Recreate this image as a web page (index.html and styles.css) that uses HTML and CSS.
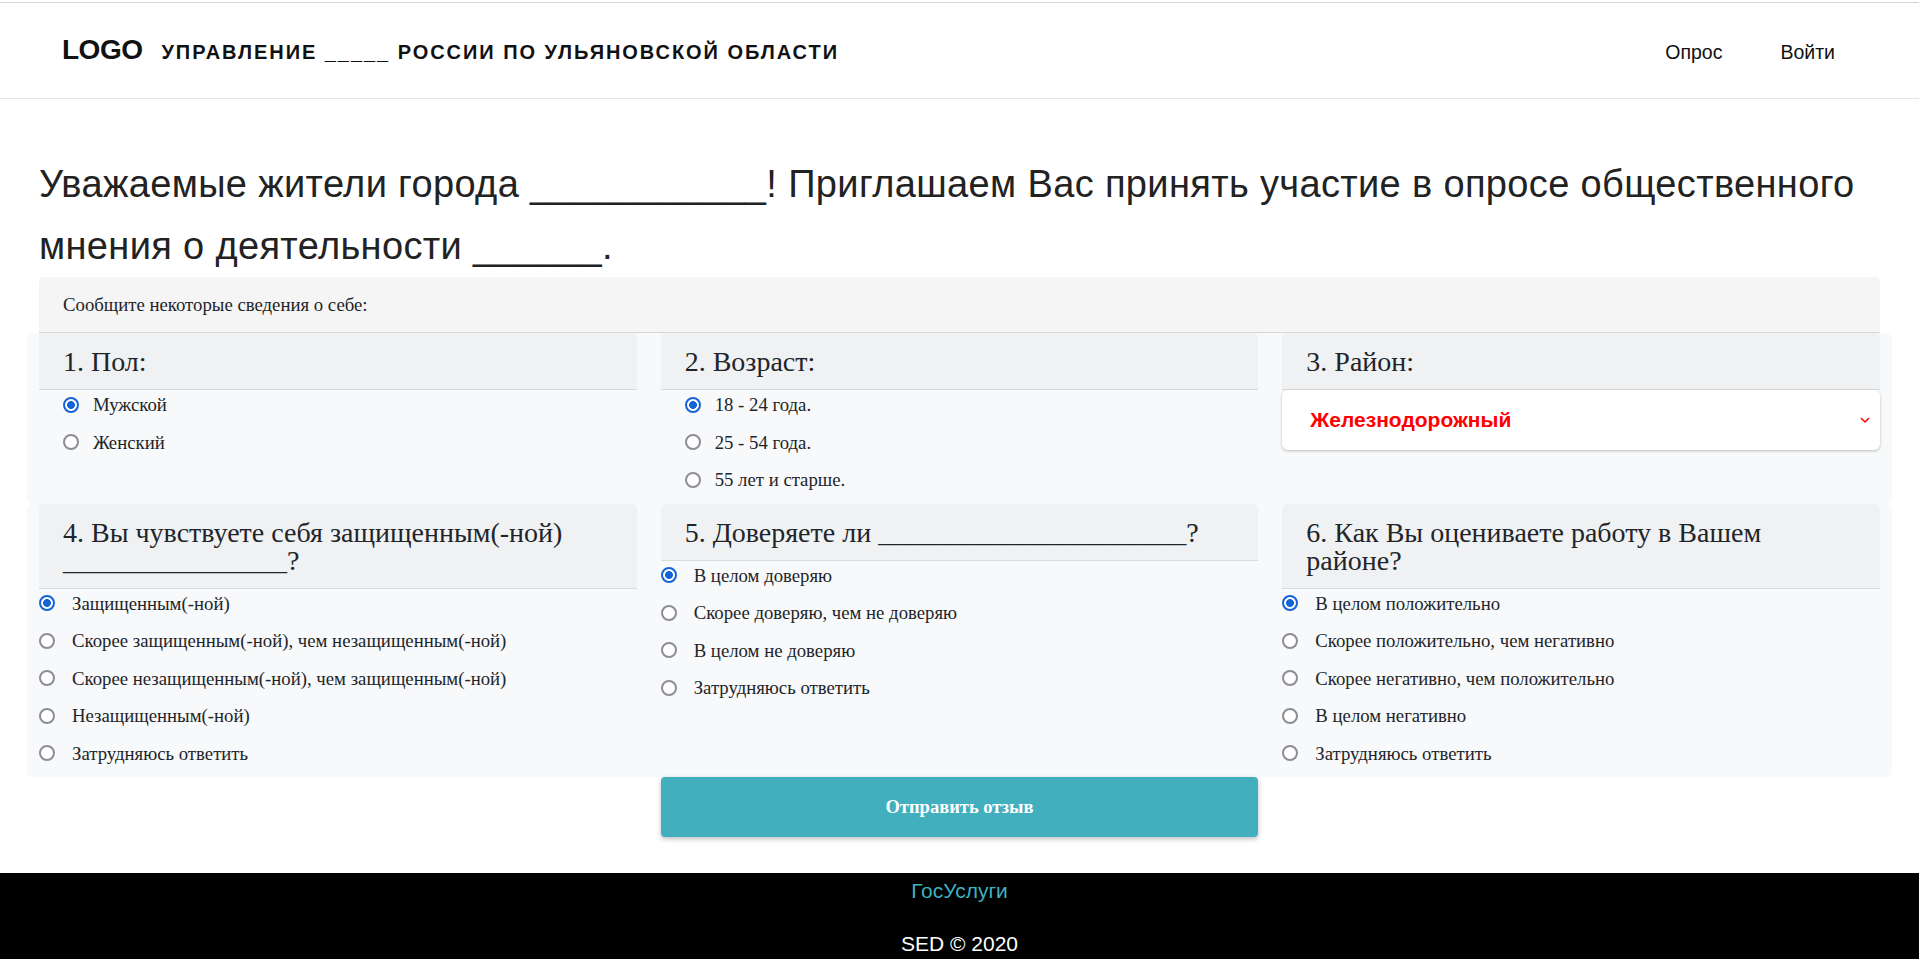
FILE: index.html
```html
<!DOCTYPE html>
<html lang="ru">
<head>
<meta charset="utf-8">
<title>Опрос</title>
<link rel="stylesheet" href="styles.css">
</head>
<body>
<header class="topbar">
  <div class="brand">
    <span class="logo">LOGO</span>
    <span class="org">УПРАВЛЕНИЕ _____ РОССИИ ПО УЛЬЯНОВСКОЙ ОБЛАСТИ</span>
  </div>
  <nav class="nav">
    <a class="nav-link" href="#">Опрос</a>
    <a class="nav-link" href="#">Войти</a>
  </nav>
</header>

<main class="container">
  <h1 class="title">Уважаемые жители города ___________! Приглашаем Вас принять участие в опросе общественного мнения о деятельности ______.</h1>

  <form class="survey">
    <div class="info">Сообщите некоторые сведения о себе:</div>

    <div class="row">
      <section class="col">
        <h3 class="q-head">1. Пол:</h3>
        <div class="opts opts-inset">
          <label class="opt"><input type="radio" name="sex" checked>Мужской</label>
          <label class="opt"><input type="radio" name="sex">Женский</label>
        </div>
      </section>
      <section class="col">
        <h3 class="q-head">2. Возраст:</h3>
        <div class="opts opts-inset">
          <label class="opt"><input type="radio" name="age" checked>18 - 24 года.</label>
          <label class="opt"><input type="radio" name="age">25 - 54 года.</label>
          <label class="opt"><input type="radio" name="age">55 лет и старше.</label>
        </div>
      </section>
      <section class="col">
        <h3 class="q-head">3. Район:</h3>
        <div class="select">
          <span class="select-value">Железнодорожный</span>
          <svg class="chevron" width="10" height="7" viewBox="0 0 10 7"><polyline points="1,1 5,5 9,1" fill="none" stroke="#f00" stroke-width="1.5"/></svg>
        </div>
      </section>
    </div>

    <div class="row">
      <section class="col">
        <h3 class="q-head">4. Вы чувствуете себя защищенным(-ной) ________________?</h3>
        <div class="opts">
          <label class="opt"><input type="radio" name="safe" checked>Защищенным(-ной)</label>
          <label class="opt"><input type="radio" name="safe">Скорее защищенным(-ной), чем незащищенным(-ной)</label>
          <label class="opt"><input type="radio" name="safe">Скорее незащищенным(-ной), чем защищенным(-ной)</label>
          <label class="opt"><input type="radio" name="safe">Незащищенным(-ной)</label>
          <label class="opt"><input type="radio" name="safe">Затрудняюсь ответить</label>
        </div>
      </section>
      <section class="col">
        <h3 class="q-head">5. Доверяете ли ______________________?</h3>
        <div class="opts">
          <label class="opt"><input type="radio" name="trust" checked>В целом доверяю</label>
          <label class="opt"><input type="radio" name="trust">Скорее доверяю, чем не доверяю</label>
          <label class="opt"><input type="radio" name="trust">В целом не доверяю</label>
          <label class="opt"><input type="radio" name="trust">Затрудняюсь ответить</label>
        </div>
      </section>
      <section class="col">
        <h3 class="q-head">6. Как Вы оцениваете работу в Вашем районе?</h3>
        <div class="opts">
          <label class="opt"><input type="radio" name="work" checked>В целом положительно</label>
          <label class="opt"><input type="radio" name="work">Скорее положительно, чем негативно</label>
          <label class="opt"><input type="radio" name="work">Скорее негативно, чем положительно</label>
          <label class="opt"><input type="radio" name="work">В целом негативно</label>
          <label class="opt"><input type="radio" name="work">Затрудняюсь ответить</label>
        </div>
      </section>
    </div>

    <div class="actions">
      <div class="action-cell">
        <button type="button" class="submit">Отправить отзыв</button>
      </div>
    </div>
  </form>
</main>

<footer class="footer">
  <a class="footer-link" href="#">ГосУслуги</a>
  <p class="copy">SED © 2020</p>
</footer>
</body>
</html>
```

FILE: styles.css
```css
* {
  box-sizing: border-box;
}

html, body {
  margin: 0;
  padding: 0;
}

body {
  padding-top: 2px;
  background: #fff;
  color: #212529;
  font-family: "Liberation Serif", "Times New Roman", serif;
}

/* ---------- header ---------- */
.topbar {
  display: flex;
  align-items: baseline;
  height: 97px;
  padding: 31px 84px 0 62px;
  border-top: 1px solid #d4d4d4;
  border-bottom: 1px solid #e6e6e6;
  font-family: "Liberation Sans", Arial, sans-serif;
  color: #111;
}

.brand {
  display: flex;
  align-items: baseline;
}

.logo {
  font-size: 28px;
  line-height: 32px;
  font-weight: 700;
  letter-spacing: -0.5px;
  margin-right: 19px;
}

.org {
  font-size: 20px;
  font-weight: 700;
  letter-spacing: 1.95px;
}

.nav {
  margin-left: auto;
  display: flex;
  gap: 58px;
}

.nav-link {
  font-size: 19.5px;
  color: #111;
  text-decoration: none;
}

/* ---------- main ---------- */
.container {
  padding: 0 39px;
}

.title {
  margin: 54px 0 0;
  font-family: "Liberation Sans", Arial, sans-serif;
  font-weight: 400;
  font-size: 38px;
  line-height: 62px;
  letter-spacing: 0.35px;
  color: #222;
}

.info {
  padding: 14px 24px;
  font-size: 18.75px;
  line-height: 27px;
  background: #f5f5f5;
  border-bottom: 1px solid #d6d6d6;
  border-radius: 5px 5px 0 0;
  color: #212529;
}

.row {
  display: grid;
  grid-template-columns: repeat(3, 1fr);
  margin: 0 -12px;
  background: #f8f9fa;
  border-radius: 6px;
}

.col {
  padding: 0 12px;
  min-width: 0;
}

.q-head {
  margin: 0;
  padding: 15px 24px 13px;
  font-size: 28px;
  line-height: 28px;
  font-weight: 400;
  color: #212529;
  background: #f0f1f3;
  border-bottom: 1px solid #d8d9da;
  border-radius: 5px 5px 0 0;
}

.opts {
  display: flex;
  flex-direction: column;
  padding-top: 1px;
}

.opts-inset {
  padding-left: 24px;
}

.opt {
  display: flex;
  align-items: center;
  height: 27px;
  margin-bottom: 10.5px;
  font-size: 18.75px;
  line-height: 27px;
  color: #212529;
}

.opt input {
  appearance: none;
  -webkit-appearance: none;
  width: 16px;
  height: 16px;
  margin: 0 17px 0 0;
  flex: none;
  border: 2px solid #8d8d96;
  border-radius: 50%;
  background: #fff;
}

.opt input:checked {
  border-color: #1463d8;
  background: radial-gradient(circle, #1463d8 0 3.6px, #fff 4.2px);
}

.opts-inset .opt input {
  margin-right: 14px;
}

.select {
  display: flex;
  align-items: center;
  justify-content: space-between;
  height: 60px;
  padding: 0 10px 0 28px;
  background: #fff;
  border-radius: 6px;
  box-shadow: 0 1px 3px rgba(0, 0, 0, 0.25);
}

.select-value {
  font-family: "Liberation Sans", Arial, sans-serif;
  font-weight: 700;
  font-size: 21px;
  color: #ff0000;
}

.chevron {
  display: block;
}

.actions {
  display: grid;
  grid-template-columns: repeat(3, 1fr);
  margin: 0 -12px;
}

.action-cell {
  grid-column: 2;
  padding: 0 12px;
}

.submit {
  display: block;
  width: 100%;
  height: 60px;
  border: 0;
  border-radius: 4px;
  background: #41afbd;
  color: #fff;
  font-family: "Liberation Serif", "Times New Roman", serif;
  font-weight: 700;
  font-size: 18.5px;
  box-shadow: 0 2px 5px rgba(0, 0, 0, 0.25);
}

/* ---------- footer ---------- */
.footer {
  margin-top: 36px;
  padding: 4px 0 1px;
  background: #000;
  text-align: center;
  font-family: "Liberation Sans", Arial, sans-serif;
}

.footer-link {
  display: block;
  font-size: 21px;
  line-height: 28px;
  color: #3fb0c0;
  text-decoration: none;
}

.copy {
  margin: 25px 0 0;
  font-size: 21px;
  line-height: 28px;
  color: #fff;
}
```
